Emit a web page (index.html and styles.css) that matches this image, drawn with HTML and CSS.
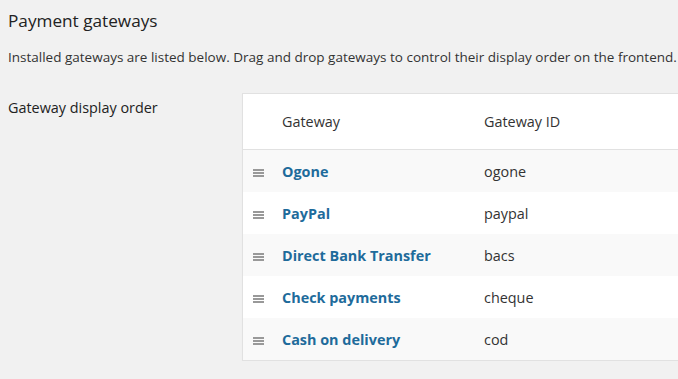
FILE: index.html
```html
<!DOCTYPE html>
<html lang="en">
<head>
<meta charset="UTF-8" />
<title>Payment gateways</title>
<link rel="stylesheet" href="styles.css">
</head>
<body>

<h2 class="title">Payment gateways</h2>
<p class="desc">Installed gateways are listed below. Drag and drop gateways to control their display order on the frontend.</p>

<div class="form-row">
  <div class="form-label">Gateway display order</div>
  <table class="gateways">
    <thead>
      <tr>
        <th class="sort"></th>
        <th class="name">Gateway</th>
        <th class="id">Gateway ID</th>
      </tr>
    </thead>
    <tbody>
      <tr>
        <td class="sort"><span class="handle"></span></td>
        <td class="name"><a href="#">Ogone</a></td>
        <td class="id">ogone</td>
      </tr>
      <tr>
        <td class="sort"><span class="handle"></span></td>
        <td class="name"><a href="#">PayPal</a></td>
        <td class="id">paypal</td>
      </tr>
      <tr>
        <td class="sort"><span class="handle"></span></td>
        <td class="name"><a href="#">Direct Bank Transfer</a></td>
        <td class="id">bacs</td>
      </tr>
      <tr>
        <td class="sort"><span class="handle"></span></td>
        <td class="name"><a href="#">Check payments</a></td>
        <td class="id">cheque</td>
      </tr>
      <tr>
        <td class="sort"><span class="handle"></span></td>
        <td class="name"><a href="#">Cash on delivery</a></td>
        <td class="id">cod</td>
      </tr>
    </tbody>
  </table>
</div>

</body>
</html>
```

FILE: styles.css
```css
/* admin settings page */
html { overflow: hidden; }
body {
  margin: 0;
  padding: 0 8px;
  background: #f1f1f1;
  color: #333;
  font-family: "Open Sans", "Liberation Sans", sans-serif;
  font-size: 13.5px;
}

.title {
  margin: 0;
  padding-top: 9px;
  font-size: 17.2px;
  font-weight: 400;
  line-height: 23px;
  color: #222;
}
.desc {
  margin: 0;
  padding-top: 15px;
  line-height: 20px;
  color: #333;
  white-space: nowrap;
}

.form-row {
  display: flex;
  align-items: flex-start;
  margin-top: 26px;
}
.form-label {
  width: 234px;
  flex-shrink: 0;
  font-size: 14.4px;
  line-height: 20px;
  padding-top: 5px;
  color: #222;
}

.gateways {
  width: 460px;
  flex-shrink: 0;
  border-collapse: collapse;
  background: #fff;
  border: 1px solid #e1e1e1;
  box-shadow: 0 1px 1px rgba(0,0,0,0.04);
  font-size: 14.4px;
}
.gateways th {
  height: 55px;
  padding: 0;
  text-align: left;
  font-weight: 400;
  color: #333;
  border-bottom: 1px solid #e1e1e1;
}
.gateways td {
  height: 42px;
  padding: 0;
  color: #333;
}
.gateways tbody tr:nth-child(odd) { background: #f9f9f9; }
.gateways .sort { width: 29px; padding-left: 10px; }
.gateways .name { width: 202px; }
.gateways .name a {
  color: #1e6b9b;
  font-weight: 700;
  text-decoration: none;
}

.handle {
  display: inline-block;
  vertical-align: middle;
  width: 11px;
  height: 8px;
  background: repeating-linear-gradient(#999 0 2px, transparent 2px 3px);
}
```
